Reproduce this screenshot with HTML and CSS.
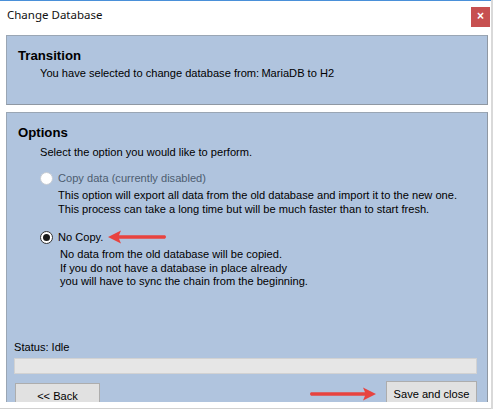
FILE: index.html
```html
<!DOCTYPE html>
<html>
<head>
<meta charset="utf-8">
<link rel="stylesheet" href="styles.css">
</head>
<body>
<div class="window">
  <div class="titlebar">
    <span class="title">Change Database</span>
    <span class="close">×</span>
  </div>
  <div class="content">
    <div class="panel transition">
      <div class="heading">Transition</div>
      <div class="text indent">You have selected to change database from:&#8201;MariaDB to H2</div>
    </div>
    <div class="panel options">
      <div class="heading">Options</div>
      <div class="text indent select">Select the option you would like to perform.</div>
      <div class="option">
        <div class="radio-row">
          <span class="radio disabled"></span>
          <span class="label disabled-text">Copy data (currently disabled)</span>
        </div>
        <div class="desc">This option will export all data from the old database and import it to the new one.<br>This process can take a long time but will be much faster than to start fresh.</div>
      </div>
      <div class="option second">
        <div class="radio-row">
          <span class="radio checked"></span>
          <span class="label">No Copy.</span>
          <svg class="arrow arrow-left" width="64" height="16" viewBox="0 0 64 16">
            <path d="M3 8 L16 1.5 L14 6.3 L60 6.3 Q62 8 60 9.7 L14 9.7 L16 14.5 Z" fill="#e8433f"/>
          </svg>
        </div>
        <div class="desc desc2">No data from the old database will be copied.<br>If you do not have a database in place already<br>you will have to sync the chain from the beginning.</div>
      </div>
      <div class="spacer"></div>
      <div class="status">Status: Idle</div>
      <div class="progress"></div>
      <div class="buttons">
        <button class="btn back">&lt;&lt; Back</button>
        <div class="right">
          <svg class="arrow arrow-right" width="72" height="16" viewBox="0 0 72 16">
            <path d="M69 8 L56 1.5 L58 6.3 L4 6.3 Q2 8 4 9.7 L58 9.7 L56 14.5 Z" fill="#e8433f"/>
          </svg>
          <button class="btn save">Save and close</button>
        </div>
      </div>
    </div>
  </div>
  <div class="bottom"></div>
</div>
</body>
</html>
```
FILE: styles.css
```css
* { box-sizing: border-box; }
html, body { margin: 0; padding: 0; background: #fff; }
body { width: 493px; height: 409px; overflow: hidden; font-family: "Liberation Sans", Arial, sans-serif; color: #000; }
.window { width: 493px; height: 409px; display: flex; flex-direction: column; border-right: 2px solid #d9d9d9; }
.titlebar { height: 35px; border-top: 1px solid #4a90d9; display: flex; align-items: flex-start; justify-content: space-between; flex: none; }
.title { font-family: "Noto Sans", "Open Sans", sans-serif; font-size: 11.5px; margin: 6px 0 0 7px; color: #111; }
.close { width: 19px; height: 20px; margin: 6px 1px 0 0; background: #c75050; color: #fff; font-size: 12px; line-height: 19px; text-align: center; font-weight: bold; }
.content { padding: 0 3px 0 6px; display: flex; flex-direction: column; flex: 1; min-height: 0; }
.panel { background: #b0c4de; border: 1px solid #9aa6b4; border-right-color: #8f98a3; border-bottom-color: #8f98a3; }
.transition { height: 70px; padding: 11px 0 0 11px; flex: none; }
.heading { font-size: 13.2px; font-weight: bold; line-height: 17px; }
.text { font-size: 11.1px; line-height: 14px; }
.indent { padding-left: 22px; }
.transition .text { margin-top: 2px; }
.options { margin-top: 7px; flex: 1; min-height: 0; overflow: hidden; padding: 11px 10px 0 7px; display: flex; flex-direction: column; border-bottom: none; }
.options .heading { padding-left: 4px; }
.options .select { margin-top: 4px; padding-left: 26px; }
.option { margin-top: 12px; padding-left: 26px; }
.option.second { margin-top: 14px; }
.radio-row { display: flex; align-items: center; height: 14px; }
.radio { width: 13px; height: 13px; border-radius: 50%; background: #fff; border: 1px solid #333; margin-right: 5px; position: relative; flex: none; }
.radio.disabled { border-color: #c8cdd4; }
.radio.checked::after { content: ""; position: absolute; left: 2px; top: 2px; width: 7px; height: 7px; border-radius: 50%; background: #1a1a1a; }
.label { font-size: 11.1px; line-height: 14px; }
.disabled-text { color: #4d5d70; }
.desc { font-size: 11.1px; line-height: 14px; padding-left: 18px; margin-top: 3px; white-space: nowrap; }
.desc2 { padding-left: 20px; line-height: 13.5px; margin-top: 4px; }
.arrow-left { margin-left: 2px; }
.spacer { flex: 1; }
.status { font-size: 11.1px; line-height: 14px; margin-bottom: 4px; }
.progress { height: 16px; background: #e6e6e6; border: 1px solid #d2d2d2; flex: none; }
.buttons { display: flex; justify-content: space-between; align-items: flex-start; margin-top: 7px; height: 21px; flex: none; }
.btn { font-family: "Liberation Sans", Arial, sans-serif; font-size: 11.1px; background: #e1e1e1; border: 1px solid #adadad; color: #000; padding: 0; flex: none; }
.back { width: 85px; height: 26px; margin-top: 2px; margin-left: 1px; }
.right { display: flex; align-items: center; height: 26px; }
.save { width: 91px; height: 26px; margin-right: 0; }
.arrow-right { margin-right: 7px; margin-top: 0px; }
.bottom { height: 7px; border-bottom: 1px solid #d0d0d0; flex: none; }
```
